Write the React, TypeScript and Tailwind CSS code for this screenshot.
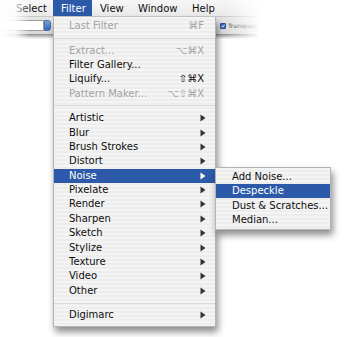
import React from 'react'

type Item =
    | { kind: 'item'; label: string; shortcut?: string; disabled?: boolean; sub?: boolean; active?: boolean }
    | { kind: 'sep' }

const items: Item[] = [
    { kind: 'item', label: 'Last Filter', shortcut: '⌘F', disabled: true },
    { kind: 'sep' },
    { kind: 'item', label: 'Extract...', shortcut: '⌥⌘X', disabled: true },
    { kind: 'item', label: 'Filter Gallery...' },
    { kind: 'item', label: 'Liquify...', shortcut: '⇧⌘X' },
    { kind: 'item', label: 'Pattern Maker...', shortcut: '⌥⇧⌘X', disabled: true },
    { kind: 'sep' },
    { kind: 'item', label: 'Artistic', sub: true },
    { kind: 'item', label: 'Blur', sub: true },
    { kind: 'item', label: 'Brush Strokes', sub: true },
    { kind: 'item', label: 'Distort', sub: true },
    { kind: 'item', label: 'Noise', sub: true, active: true },
    { kind: 'item', label: 'Pixelate', sub: true },
    { kind: 'item', label: 'Render', sub: true },
    { kind: 'item', label: 'Sharpen', sub: true },
    { kind: 'item', label: 'Sketch', sub: true },
    { kind: 'item', label: 'Stylize', sub: true },
    { kind: 'item', label: 'Texture', sub: true },
    { kind: 'item', label: 'Video', sub: true },
    { kind: 'item', label: 'Other', sub: true },
    { kind: 'sep' },
    { kind: 'item', label: 'Digimarc', sub: true },
]

const noiseItems = ['Add Noise...', 'Despeckle', 'Dust & Scratches...', 'Median...']

const Arrow = ({ white }: { white?: boolean }) => (
    <svg width="6" height="8" viewBox="0 0 6 8" className="shrink-0">
        <path d="M0.5 0.5 L5.5 4 L0.5 7.5 Z" fill={white ? '#ffffff' : '#333333'} />
    </svg>
)

const stripes = 'bg-[repeating-linear-gradient(to_bottom,#f4f4f4_0px,#f4f4f4_2px,#ededed_2px,#ededed_4px)]'

export default function App() {
    return (
        <div className="relative w-[350px] h-[337px] bg-white overflow-hidden font-['DejaVu_Sans',sans-serif] text-[10px] text-[#0d0d0d]">
            {/* Menu bar */}
            <div className="grid grid-cols-[8px_45px_39px_38px_54px_36px_1fr] h-[17px] border-b border-[#c8c8c8] bg-[linear-gradient(to_bottom,#f7f7f7,#e9e9e9)]">
                <div />
                <div className="pl-2 flex items-center">Select</div>
                <div className="pl-2 flex items-center bg-[#2c5aa8] text-white">Filter</div>
                <div className="pl-2 flex items-center">View</div>
                <div className="pl-2 flex items-center">Window</div>
                <div className="pl-2 flex items-center">Help</div>
                <div />
            </div>

            {/* Options bar */}
            <div className="flex h-[17px] items-center bg-[linear-gradient(to_bottom,#e6e6e6,#d8d8d8)]">
                <div className="flex items-center h-[11px]">
                    <div className="w-[44px] h-full bg-white border border-[#9a9a9a] rounded-l-[3px]" />
                    <div className="w-[7px] h-full bg-[linear-gradient(to_bottom,#7da4e0,#2d62c4)] rounded-r-[3px] border border-[#4a6fa8]" />
                </div>
                <div className="ml-[169px] flex items-center gap-[2px]">
                    <div className="w-[6px] h-[6px] rounded-[1px] bg-[#3a6cc4] border border-[#294f94] flex items-center justify-center">
                        <svg width="4" height="4" viewBox="0 0 4 4">
                            <path d="M0.5 2 L1.6 3.2 L3.6 0.6" stroke="#fff" strokeWidth="0.9" fill="none" />
                        </svg>
                    </div>
                    <span className="text-[6px] text-[#333]">Transparency</span>
                </div>
            </div>
            <div className="h-[5px] bg-[linear-gradient(to_bottom,rgba(0,0,0,0.45),rgba(0,0,0,0))]" />

            {/* Edge fades */}
            <div className="absolute left-0 top-0 w-[30px] h-[40px] bg-[linear-gradient(to_right,#fff_0%,rgba(255,255,255,0.85)_50%,rgba(255,255,255,0)_100%)]" />
            <div className="absolute left-[226px] top-0 w-[34px] h-[40px] bg-[linear-gradient(to_right,rgba(255,255,255,0),#fff)]" />
            <div className="absolute left-[260px] top-0 w-[90px] h-[40px] bg-white" />

            {/* Filter menu */}
            <div className={`absolute left-[53px] top-[17px] w-[163px] pt-[2px] pb-[3.4px] border-x border-b border-[#b4b4b4] shadow-[2px_5px_7px_rgba(0,0,0,0.45)] ${stripes}`}>
                {items.map((item, i) =>
                    item.kind === 'sep' ? (
                        <div key={i} className="h-[10px] flex items-center">
                            <div className="w-full h-px bg-[#dadada]" />
                        </div>
                    ) : (
                        <div
                            key={i}
                            className={`h-[14.4px] flex items-center justify-between pl-[15px] ${item.sub ? 'pr-[9px]' : 'pr-[11px]'} ${item.active ? 'bg-[#2c5aa8] text-white' : item.disabled ? 'text-[#a3a3a3]' : ''}`}
                        >
                            <span className="leading-none">{item.label}</span>
                            {item.shortcut && <span className="leading-none">{item.shortcut}</span>}
                            {item.sub && <Arrow white={item.active} />}
                        </div>
                    )
                )}
            </div>

            {/* Noise submenu */}
            <div className={`absolute left-[215px] top-[166.6px] w-[116px] pt-[2px] pb-[2px] border border-[#b4b4b4] shadow-[2px_5px_7px_rgba(0,0,0,0.45)] ${stripes}`}>
                {noiseItems.map((label) => (
                    <div
                        key={label}
                        className={`h-[14.4px] flex items-center pl-[16px] ${label === 'Despeckle' ? 'bg-[#2c5aa8] text-white' : ''}`}
                    >
                        <span className="leading-none">{label}</span>
                    </div>
                ))}
            </div>
        </div>
    )
}
